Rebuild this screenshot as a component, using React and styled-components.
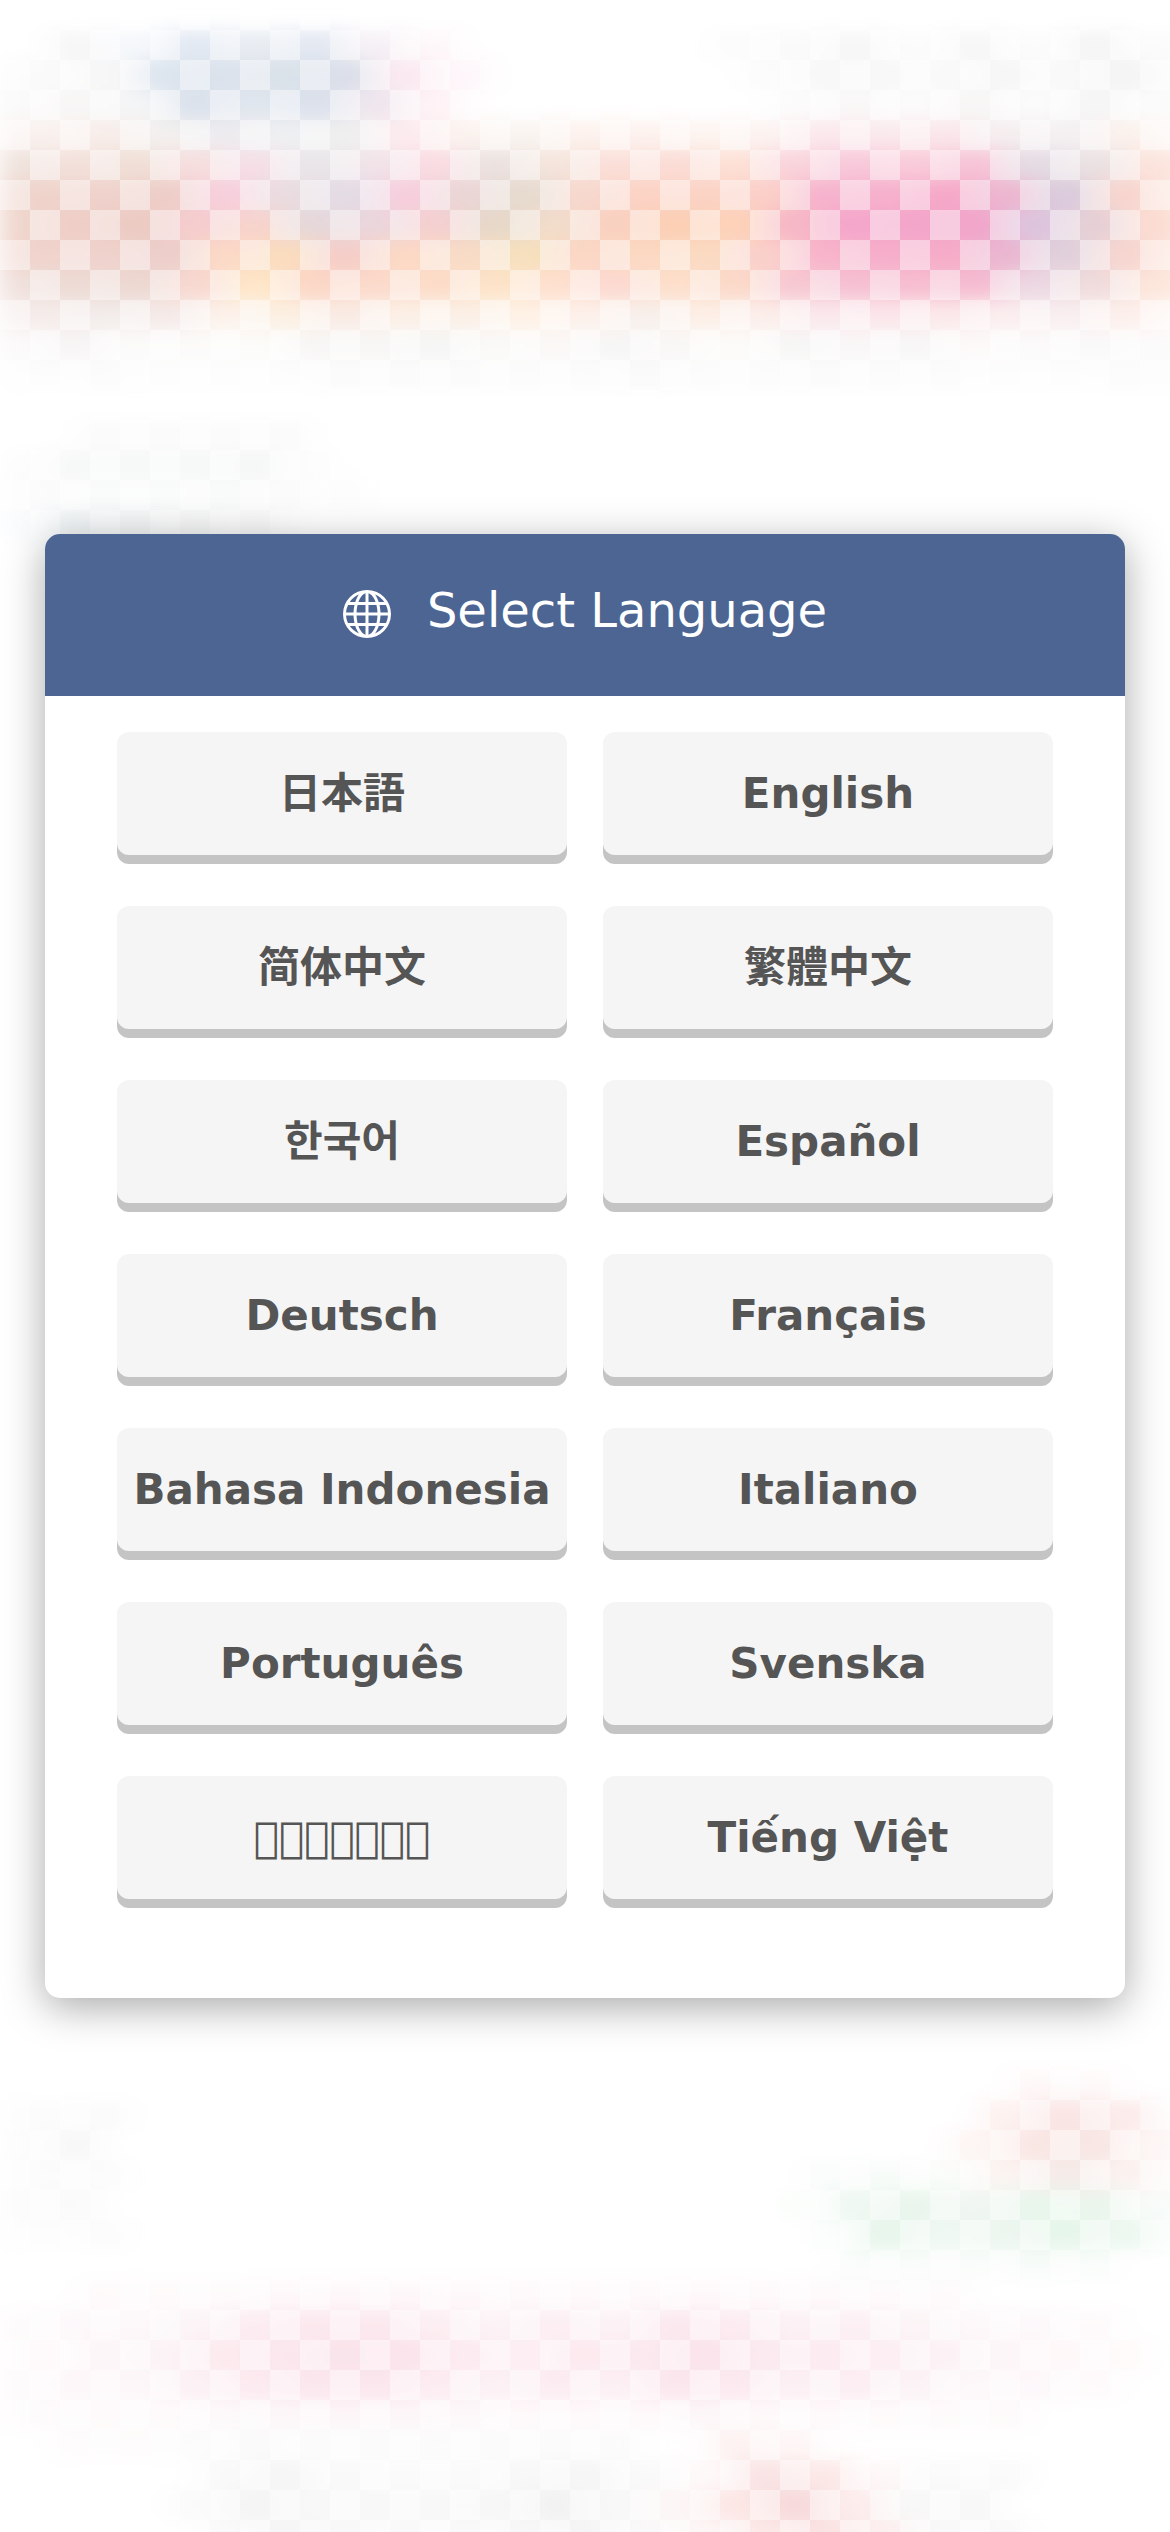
import React, { useState } from 'react';
import styled, { createGlobalStyle } from 'styled-components';
import { BsGlobe } from 'react-icons/bs';

const GlobalStyle = createGlobalStyle`
  * {
    box-sizing: border-box;
  }

  body {
    margin: 0;
    background: #fff;
    font-family: 'DejaVu Sans', 'Noto Sans CJK JP', sans-serif;
  }
`;

const Page = styled.main`
  position: relative;
  display: flex;
  align-items: center;
  justify-content: center;
  min-height: 100vh;
  padding: 45px;
  overflow: hidden;
`;

const BackdropSvg = styled.svg`
  position: absolute;
  inset: 0;
  width: 100%;
  height: 100%;
`;

const Dialog = styled.section`
  position: relative;
  width: 100%;
  background: #fff;
  border-radius: 15px;
  box-shadow: 0 9px 42px rgba(0, 0, 0, 0.34);
  overflow: hidden;
`;

const Title = styled.h1`
  margin: 0;
  padding: 48px 36px 58px;
  background: #4c6593;
  color: #fff;
  font-size: 48px;
  font-weight: normal;
  line-height: 56px;
  text-align: center;
`;

const GlobeIcon = styled(BsGlobe)`
  width: 48px;
  height: 48px;
  margin-right: 36px;
  vertical-align: middle;
`;

const LanguageGrid = styled.div`
  display: grid;
  grid-template-columns: repeat(2, minmax(0, 1fr));
  gap: 51px 36px;
  padding: 36px 72px 99px;
`;

const LanguageButton = styled.button`
  height: 123px;
  padding: 0;
  border: none;
  border-radius: 12px;
  background: #f5f5f5;
  box-shadow: 0 9px 0 #c4c4c4;
  color: #555;
  font-family: 'DejaVu Sans', ${(props) => props.$cjk || "'Noto Sans CJK JP'"},
    sans-serif;
  font-size: 42px;
  font-weight: bold;
  line-height: 46px;
  white-space: nowrap;
  cursor: pointer;

  &:active {
    box-shadow: 0 3px 0 #c4c4c4;
  }
`;

const languages = [
  { code: 'ja', label: '日本語' },
  { code: 'en', label: 'English' },
  { code: 'zh-Hans', label: '简体中文', cjk: "'Noto Sans CJK SC'" },
  { code: 'zh-Hant', label: '繁體中文', cjk: "'Noto Sans CJK TC'" },
  { code: 'ko', label: '한국어', cjk: "'Noto Sans CJK KR'" },
  { code: 'es', label: 'Español' },
  { code: 'de', label: 'Deutsch' },
  { code: 'fr', label: 'Français' },
  { code: 'id', label: 'Bahasa Indonesia' },
  { code: 'it', label: 'Italiano' },
  { code: 'pt', label: 'Português' },
  { code: 'sv', label: 'Svenska' },
  // private use characters, drawn as seven missing-glyph boxes
  { code: 'th', label: '\uE5C0'.repeat(7) },
  { code: 'vi', label: 'Tiếng Việt' },
];

const CELL = 30;

// row number -> colours of its 60px wide patches, '-' leaves a patch white
const colorRows = {
  1: '- f7f7f7 f5f8fb e2e9f3 e8ecf2 e3e8f2 f6f1f6 fef8fa - - - - fcfcfc fafafa f7f7f7 fcfcfc f7f7f7 fcfcfc f5f5f5 fcfcfc',
  2: 'fafafa f7f7f7 dce4ee dbe2ec d9e1e9 dadfe9 fbe8f0 fef6fa - - - - fcfcfc f8f8f8 f8f8f8 f9f9f9 f7f7f7 f9f9f9 f4f4f4 fafafa',
  3: 'fafafa f8f7f6 f4f5f6 dbe2ec e0e6ee dce1ec efe6ee fef3f6 - - - - - fcfcfc faf8f8 fcfbfb f8f7f6 fbfbfb f6f6f6 fcfcfc',
  4: 'f9f1ee f8ede9 f3f0ee eeecf0 eff0f2 f0f0f0 fdebee fbf3ee f9f4f0 fdf2ed fdf2ee fdf4f0 fcf3f0 fbe8ec fae9ec fae6ea f5eeef f4f0f2 fbf1ec fdf8f6',
  5: 'efe2dc f3e0da f0dfd6 f6dede f5dfe6 e9e5e8 f1e3e8 f9dce2 ebe2df f4e4dc fadfd8 fbdcd5 fde0d6 f9d3dc f8c8d9 f9cad9 f7c3d6 e4dbe3 eae1e2 fce3dc',
  6: 'efd3cb efd2cb eecdc8 f7cfdd e9dce0 e3dbe5 f7cedd ead6d6 e6dacf f7d8ce fcd3c4 fbd3c5 fbcfc8 f6b2cc f6b0cc f6a8c8 edb5cf dacbdc f8d5ce fde8dd',
  7: 'efd6cc efcec7 ebcbc2 f5ccce f7d3cc e5d8da ead6dc f4cfd0 e6d8c9 f2dccb f9d0bf fbcfb4 fdd2b8 f6b6c6 f4a6cb f3a5ca f1a5ca ddc4de e5d0d6 fcdcd2',
  8: 'f0d3cc f0d2cc ecceca fbd9c6 fadcbd f5cdc8 fcd9c4 f8dcc6 f6e0bc fbd7c5 fcd9c2 fbdac2 fad0cb f8b4ca f6aeca f6acc8 eab6d0 e0d0dc f7d5cf fee6dc',
  9: 'f0e0dc eddad4 ecd8d1 f8d8d0 fee6c8 fcd7c6 fbdacb fddcc8 fde3c8 fee0cf fcd9d0 fddfcb fbd9c9 f7c8d2 f6c0d2 f7bdd0 f5bcd0 ecd8e2 f0dcdc fde5da',
  10: 'f5ecea f3ecea f4eae8 fcf2ea fcf0e2 f9ebe4 fcf0e6 fbf0e6 fef2e6 fdf1ea f8f0eb fdefe6 fceeea fae8ec fbe6ea fbe8ea fbeeef f9eff0 fdf0ec fef8f4',
  11: 'fcfafa f8f5f5 fcfbfa fcfbfa fcfcfa f8f7f6 f8f7f6 f6f6f5 f9f9f8 fbf8f7 f7f6f6 f9f8f7 fcfbf9 f7f7f6 f9f7f7 f8f7f7 fdf9f9 fcfafa faf9f9 fcfbfb',
  12: 'fdfdfd fcfcfc fdfdfd fdfdfd fdfdfd fbfbfb fbfbfb fbfbfb fcfcfc fcfcfc fafafa fcfcfc fcfcfc fbfbfb fcfcfc fcfcfc fdfdfd fdfdfd fcfcfc fcfcfc',
  14: '- fbfbfb fbfbfb fbfbfb fbfbfb -',
  15: 'fdfdfd f7f8f8 f7f8f8 f7f8f8 f6f7f7 fdfdfd',
  16: 'fcfcfc fafbfb fafbfb f9fafa fbfbfb fdfdfd',
  17: 'fafcfe f0f4f6 f2f4f5 f5f6f6 f8f8f8 -',
  69: '- - - - - - - - - - - - - - - - - fef8f8 fef9f9 -',
  70: 'fcfcfc fbfbfb - - - - - - - - - - - - - - fdf2f0 f9e5e4 fcebea fdfbfb',
  71: 'fdfdfd f8f8f8 - - - - - - - - - - - - - - fdf5f3 f9e6e3 f8e6e3 fdf6f5',
  72: 'fcfcfc fcfcfc - - - - - - - - - - - fafdfb f8fcf9 fafdfa fbf4f2 f5ebe8 fbf2f0 fefafa',
  73: 'fcfcfc fafafa - - - - - - - - - - - fcfefc eff8f2 e9f6ec f0f6f2 e8f6ec eaf5ec f8fcf9',
  74: 'fdfdfd fcfcfc - - - - - - - - - - - fbfefc e7f6eb eff8f2 ecf6ef e6f6ea ecf8f0 fafdfb',
  75: '- - - - - - - - - - - - - - fafdfb fafdfb fafdfb f8fcf9 fafdfb -',
  76: '- fefafb fefafb fefafb fef8f9 fef7f9 fef7f9 fef8f9 fef9fa fef9fa fef9fa fef8fa fef9fa fef9fa fefafb fefafb - - - -',
  77: 'fefbfc fdf8fa fdf8fa fcf4f6 fcecf1 fbe8ee fbe8ee fceef2 fcf3f6 fceef3 fcf2f5 fbe8ef fcebf0 fcf1f5 fcf0f4 fcf4f6 fdf8fa fdf8fa fefafb -',
  78: 'fefafb fdf6f8 fcf3f6 fce9ee fbe6ed fae3ea fbe3eb fceaf0 fceef3 fce9ef fbe8ef fbe3eb fbe9f0 fceaf0 fceef3 fcf2f5 fdf6f8 fef8f9 fefafa -',
  79: 'fefbfc fdf7f9 fdf7f9 fcf1f4 fceaf0 fbe6ed fbe6ed fcecf1 fcf1f4 fcecf2 fcf0f4 fbe6ed fce9f0 fcf0f4 fceef3 fcf3f6 fdf8fa fdf8fa fefafb -',
  80: 'fefbfc fefafb fefafb fdf9fa fdf7f9 fdf6f8 fdf6f8 fdf8fa fef9fa fef9fa fef9fa fdf7f9 fef9fa fef9fa fefafb fefafb fefafb - - -',
  81: '- fefcfc fefcfc fcfcfc fafafa fcfcfc fcfcfc fcfcfc fcfcfc fbfbfb fcfcfc - fdf3f1 fef7f6 - - - - - -',
  82: '- - - f9f9f9 f6f6f6 f9f9f9 fafafa fafafa f8f8f8 f6f6f6 f9f9f9 fef9f9 f9e3e4 fbe8e6 fef8f8 fafafa fafafa - - -',
  83: '- - - fafafa f4f4f4 f8f8f8 f8f8f8 f8f8f8 f7f7f7 f2f2f2 f8f8f8 fdf5f5 fce6e4 f7dadb fdecec f8f8f8 f8f8f8 - - -',
  84: '- - - fafafa f6f6f6 f8f8f8 f9f9f9 f9f9f9 f8f8f8 f5f5f5 f9f9f9 fdf7f7 fce9e7 fae2e2 fdefef f9f9f9 f9f9f9 - - -',
};

const patches = Object.entries(colorRows).flatMap(([row, colors]) =>
  colors
    .split(' ')
    .map((color, col) => ({ color, col, row: Number(row) }))
    .filter(({ color }) => color !== '-'),
);

// each patch is centred on the dark check of its row, the first starts at the edge
const patchSpan = (col, row) => {
  const shift = row % 2 === 0 ? CELL / 2 : -CELL / 2;
  const start = col === 0 ? 0 : col * CELL * 2 + shift;
  const end = (col + 1) * CELL * 2 + shift;
  return { x: start, width: end - start };
};

function Backdrop() {
  return (
    <BackdropSvg
      viewBox="0 0 1170 2532"
      preserveAspectRatio="xMidYMid slice"
      aria-hidden="true"
    >
      <defs>
        <filter id="soften" x="-5%" y="-5%" width="110%" height="110%">
          <feGaussianBlur stdDeviation="13 9" />
        </filter>
        <pattern
          id="checks"
          width={CELL * 2}
          height={CELL * 2}
          patternUnits="userSpaceOnUse"
        >
          <path d="M0 0h30v30h30v30h-30v-30h-30z" fill="#fff" />
        </pattern>
      </defs>
      <g filter="url(#soften)">
        {patches.map(({ color, col, row }) => (
          <rect
            key={`${row}-${col}`}
            {...patchSpan(col, row)}
            y={row * CELL}
            height={CELL}
            fill={`#${color}`}
          />
        ))}
      </g>
      <rect width="100%" height="100%" fill="url(#checks)" opacity="0.42" />
    </BackdropSvg>
  );
}

function App() {
  const [selected, setSelected] = useState('en');

  return (
    <Page>
      <GlobalStyle />
      <Backdrop />
      <Dialog aria-labelledby="language-title">
        <Title id="language-title">
          <GlobeIcon aria-hidden="true" />
          Select Language
        </Title>
        <LanguageGrid>
          {languages.map(({ code, label, cjk }) => (
            <LanguageButton
              key={code}
              type="button"
              lang={code}
              $cjk={cjk}
              aria-pressed={selected === code}
              onClick={() => setSelected(code)}
            >
              {label}
            </LanguageButton>
          ))}
        </LanguageGrid>
      </Dialog>
    </Page>
  );
}

export default App;
